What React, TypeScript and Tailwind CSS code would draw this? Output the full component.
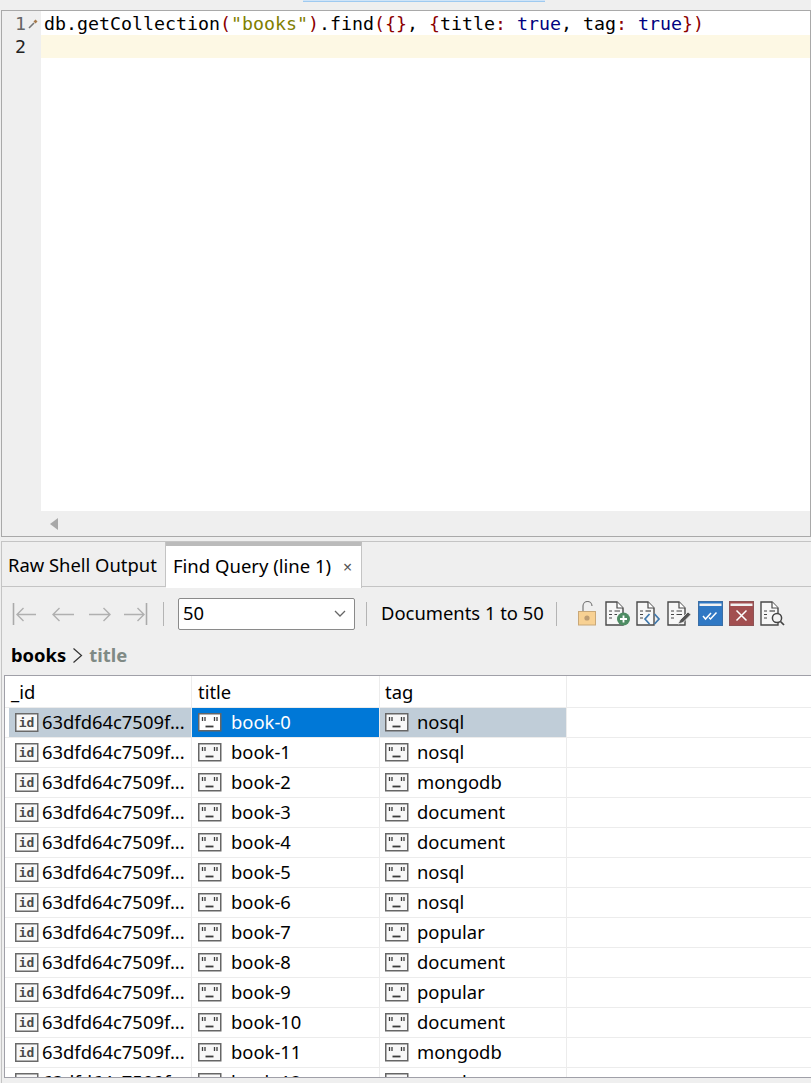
import React from "react";

const uiFont = "font-['Noto_Sans','Open_Sans',sans-serif]";

const rows = [
  ["book-0", "nosql"],
  ["book-1", "nosql"],
  ["book-2", "mongodb"],
  ["book-3", "document"],
  ["book-4", "document"],
  ["book-5", "nosql"],
  ["book-6", "nosql"],
  ["book-7", "popular"],
  ["book-8", "document"],
  ["book-9", "popular"],
  ["book-10", "document"],
  ["book-11", "mongodb"],
  ["book-12", "popular"],
];

// small type badges in the grid cells
function IdIcon() {
  return (
    <svg width="24" height="19" viewBox="0 0 24 19" className="shrink-0">
      <rect x="0.75" y="0.75" width="22" height="17.5" fill="#f8f8f8" stroke="#6a6a6a" strokeWidth="1.5" />
      <text x="11.5" y="14" textAnchor="middle" fontFamily="DejaVu Sans Mono" fontWeight="700" fontSize="13" fill="#4a4a4a">
        id
      </text>
    </svg>
  );
}

function StrIcon({ selected }: { selected?: boolean }) {
  const ink = "#3c3c3c";
  return (
    <svg width="24" height="19" viewBox="0 0 24 19" className="shrink-0">
      <rect x="0.75" y="0.75" width="22" height="17" fill={selected ? "#ffffff" : "#f8f8f8"} stroke="#666666" strokeWidth="1.5" />
      <path d="M4.5 4v4M7 4v4M16.5 4v4M19 4v4" stroke={ink} strokeWidth="1.3" />
      <path d="M7.5 13.5h8" stroke={ink} strokeWidth="1.8" />
    </svg>
  );
}

function NavIcon({ kind }: { kind: "first" | "prev" | "next" | "last" }) {
  const c = "#b0b0b0";
  return (
    <svg width="26" height="24" viewBox="0 0 26 24" className="shrink-0">
      {kind === "first" && <path d="M1.5 1v22" stroke="#aaa" strokeWidth="1.6" />}
      {kind === "last" && <path d="M24.5 1v22" stroke="#aaa" strokeWidth="1.6" />}
      {kind === "first" || kind === "prev" ? (
        <path d={kind === "first" ? "M24 12.5H5M11.5 6L5 12.5l6.5 6.5" : "M24 12.5H3M9.5 6L3 12.5 9.5 19"} fill="none" stroke={c} strokeWidth="1.4" />
      ) : (
        <path d={kind === "last" ? "M2 12.5h20M15.5 6l6.5 6.5-6.5 6.5" : "M2 12.5h21M16.5 6l6.5 6.5-6.5 6.5"} fill="none" stroke={c} strokeWidth="1.4" />
      )}
    </svg>
  );
}

function Sep() {
  return <div className="w-px h-[24px] bg-[#b4b4b4] shrink-0" />;
}

function DocBase({ children }: { children?: React.ReactNode }) {
  return (
    <svg width="25" height="25" viewBox="0 0 25 25" className="shrink-0">
      <path d="M1 1h11l6 6v17H1z" fill="#f7f7f7" stroke="#4a4a4a" strokeWidth="1.4" />
      <path d="M12 1v6h6" fill="#fff" stroke="#4a4a4a" strokeWidth="1.2" />
      <path d="M4 10h3M4 13.5h3M4 17h3" stroke="#444" strokeWidth="1.2" />
      {children}
    </svg>
  );
}

function ToolIcons() {
  return (
    <div className="flex items-center gap-[6px]">
      <svg width="22" height="25" viewBox="0 0 22 25" className="shrink-0">
        <path d="M6 10V5a4.5 4.5 0 0 1 9 0" fill="none" stroke="#777" strokeWidth="1.2" />
        <rect x="1.5" y="10.5" width="17" height="13.5" fill="#f8d193" stroke="#c9a878" />
        <circle cx="10" cy="17" r="2.6" fill="#bd9c72" />
      </svg>
      <DocBase>
        <path d="M9.5 10H15M9.5 13.5H12" stroke="#444" strokeWidth="1.2" />
        <circle cx="18.5" cy="18" r="6.5" fill="#4e8c63" />
        <path d="M18.5 14.5v7M15 18h7" stroke="#fff" strokeWidth="1.8" />
      </DocBase>
      <DocBase>
        <path d="M9.5 10H15" stroke="#444" strokeWidth="1.2" />
        <path d="M13.5 13l-4.5 5 4.5 5M18.5 13l4.5 5-4.5 5" fill="none" stroke="#3f78ad" strokeWidth="1.7" />
      </DocBase>
      <DocBase>
        <path d="M9.5 10H15M9.5 13.5H15" stroke="#444" strokeWidth="1.2" />
        <path d="M11 23l2-4 8-8 3 2.5-8 8z" fill="#555" stroke="#f0f0f0" strokeWidth="0.8" />
      </DocBase>
      <svg width="25" height="25" viewBox="0 0 25 25" className="shrink-0">
        <rect x="0.5" y="0.5" width="24" height="24" fill="#2f78c4" stroke="#3b6ea5" />
        <rect x="1.5" y="2.5" width="22" height="2.5" fill="#f2f2f2" />
        <path d="M5 15l2.5 3 5.5-6M11 16.5l1.5 1.5 6-6.5" fill="none" stroke="#fff" strokeWidth="1.5" />
      </svg>
      <svg width="25" height="25" viewBox="0 0 25 25" className="shrink-0">
        <rect x="0.5" y="0.5" width="24" height="24" fill="#a24f50" stroke="#8e5456" />
        <rect x="1.5" y="2.5" width="22" height="2.5" fill="#f2f2f2" />
        <path d="M7.5 9.5l10 10M17.5 9.5l-10 10" stroke="#fff" strokeWidth="1.5" />
      </svg>
      <DocBase>
        <path d="M9.5 10H15" stroke="#444" strokeWidth="1.2" />
        <circle cx="17" cy="17" r="4.6" fill="#f4f4f4" stroke="#444" strokeWidth="1.5" />
        <path d="M20.5 20.5l3.5 3.5" stroke="#444" strokeWidth="1.7" />
      </DocBase>
    </div>
  );
}

export default function App() {
  return (
    <div className={`h-[1083px] w-[811px] bg-[#efefef] overflow-hidden flex flex-col text-[18.4px] text-black ${uiFont}`}>
      {/* sliver of the window tab above the editor */}
      <div className="h-[10px] shrink-0 pl-[303px]">
        <div className="h-[2px] w-[242px] bg-[#cfe4f8] border-b border-[#9fcaf0]" />
      </div>

      {/* Script editor */}
      <div className="h-[527px] shrink-0 ml-[1px] border border-[#a9a9a9] flex flex-col">
        <div className="flex-1 flex min-h-0">
          <div className="w-[39px] shrink-0 flex flex-col font-['DejaVu_Sans_Mono',monospace] text-[18.28px] leading-[23px]">
            <div className="h-[24px] flex items-center pl-[13px] text-[#666]">
              <span>1</span>
              <svg width="11" height="11" viewBox="0 0 11 11" className="ml-[2px]">
                <path d="M1 10l5-5" stroke="#777" strokeWidth="1.6" />
                <path d="M5.5 3.5l2-2 2 2-2 2z" fill="#a5794a" />
              </svg>
            </div>
            <div className="h-[23px] flex items-center pl-[13px] text-[#222]">2</div>
          </div>
          <div className="flex-1 bg-white font-['DejaVu_Sans_Mono',monospace] text-[18.28px] leading-[23px] whitespace-pre">
            <div className="h-[24px] pl-[3px] flex items-center">
              <span>
                db.getCollection<span className="text-[#8b0000]">(</span>
                <span className="text-[#808000]">"books"</span>
                <span className="text-[#8b0000]">)</span>.find<span className="text-[#8b0000]">({"{}"}</span>, <span className="text-[#8b0000]">{"{"}</span>title<span className="text-[#8b0000]">:</span> <span className="text-[#000080]">true</span>, tag<span className="text-[#8b0000]">:</span> <span className="text-[#000080]">true</span>
                <span className="text-[#8b0000]">{"})"}</span>
              </span>
            </div>
            <div className="h-[23px] bg-[#fdf8e4]" />
          </div>
        </div>
        <div className="h-[25px] shrink-0 flex items-center pl-[47px]">
          <svg width="10" height="12" viewBox="0 0 10 12">
            <path d="M9 0v12L1 6z" fill="#a8a8a8" />
          </svg>
        </div>
      </div>

      {/* Result panel */}
      <div className="mt-[4px] ml-[1px] flex-1 min-h-0 border-t border-l border-[#c4c4c4] flex flex-col">
        <div className="h-[45px] shrink-0 flex border-b border-[#c4c4c4]">
          <div className="w-[164px] pl-[6px] pt-[2px] flex items-center border-r border-[#c4c4c4] whitespace-nowrap">Raw Shell Output</div>
          <div className="w-[196px] h-[46px] -mb-px bg-white border-t-[4px] border-r border-t-[#bbbbbb] border-r-[#c4c4c4] flex items-center pl-[7px] pb-[3px] whitespace-nowrap text-[18.5px]">
            Find Query (line 1)
            <span className="ml-[12px] mt-[3px] text-[16px] text-[#555] leading-none">×</span>
          </div>
        </div>

        <div className="h-[53px] shrink-0 flex items-center pl-[10px]">
          <div className="flex items-center">
            <NavIcon kind="first" />
            <div className="ml-[12px]"><NavIcon kind="prev" /></div>
            <div className="ml-[11px]"><NavIcon kind="next" /></div>
            <div className="ml-[9px]"><NavIcon kind="last" /></div>
          </div>
          <div className="ml-[15px]"><Sep /></div>
          <div className="ml-[14px] w-[177px] h-[32px] bg-white border border-[#8a8a8a] rounded-[2px] flex items-center justify-between pl-[4px] pr-[8px]">
            <span className="pb-[2px]">50</span>
            <svg width="12" height="8" viewBox="0 0 12 8">
              <path d="M1 1l5 5 5-5" fill="none" stroke="#666" strokeWidth="1.3" />
            </svg>
          </div>
          <div className="ml-[11px]"><Sep /></div>
          <div className="ml-[14px] w-[165px] pb-[2px] whitespace-nowrap">Documents 1 to 50</div>
          <div className="ml-[10px]"><Sep /></div>
          <div className="ml-[20px] -mt-[1px]"><ToolIcons /></div>
        </div>

        <div className="h-[35px] shrink-0 flex items-center pl-[9px] pb-[5px]">
          <span className="font-bold">books</span>
          <svg width="11" height="17" viewBox="0 0 11 17" className="mx-[6px]">
            <path d="M1.5 1.5l8 7-8 7" fill="none" stroke="#333" strokeWidth="1.2" />
          </svg>
          <span className="font-bold text-[#7f8a85]">title</span>
        </div>

        {/* Documents grid */}
        <div className="h-[403px] shrink-0 ml-[2px] bg-white border-t border-l border-b border-[#a0a0a8] overflow-hidden">
          <div className="h-[32px] flex border-b border-[#ececec]">
            <div className="w-[187px] pl-[6px] flex items-center border-r border-[#ececec]">_id</div>
            <div className="w-[188px] pl-[6px] flex items-center border-r border-[#ececec]">title</div>
            <div className="w-[187px] pl-[5px] flex items-center border-r border-[#ececec]">tag</div>
          </div>
          {rows.map(([title, tag], i) => (
            <div key={title} className="h-[30px] flex border-b border-[#ececec] shrink-0">
              <div className={`w-[187px] flex items-center pl-[10px] border-r border-[#ececec] ${i === 0 ? "bg-[linear-gradient(to_right,white_4px,#c0cdd8_4px)]" : ""}`}>
                <IdIcon />
                <span className="ml-[3px] pb-[2px] whitespace-nowrap">63dfd64c7509f...</span>
              </div>
              <div className={`w-[188px] flex items-center pl-[6px] border-r border-[#ececec] ${i === 0 ? "bg-[#0078d7] text-white" : ""}`}>
                <StrIcon selected={i === 0} />
                <span className="ml-[9px] pb-[2px]">{title}</span>
              </div>
              <div className={`w-[187px] flex items-center pl-[5px] border-r border-[#ececec] ${i === 0 ? "bg-[#c0cdd8]" : ""}`}>
                <StrIcon />
                <span className="ml-[8px] pb-[2px]">{tag}</span>
              </div>
            </div>
          ))}
        </div>
      </div>
    </div>
  );
}
